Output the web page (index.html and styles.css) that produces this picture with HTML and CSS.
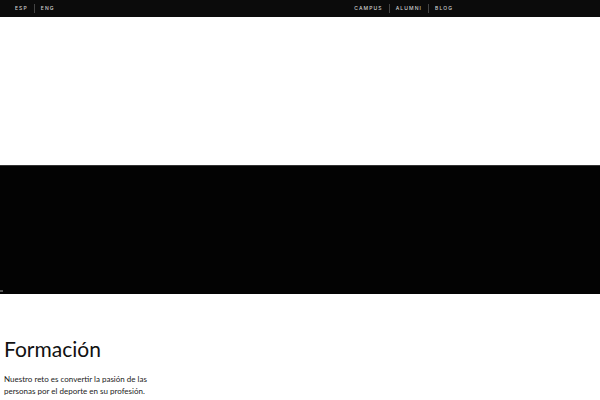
FILE: index.html
```html
<!DOCTYPE html>
<html lang="es">
<head>
<meta charset="utf-8">
<link rel="stylesheet" href="styles.css">
</head>
<body>
<header class="topbar">
  <nav class="langs">
    <a class="item">ESP</a>
    <span class="sep"></span>
    <a class="item">ENG</a>
  </nav>
  <nav class="links">
    <a class="item">CAMPUS</a>
    <span class="sep"></span>
    <a class="item">ALUMNI</a>
    <span class="sep"></span>
    <a class="item">BLOG</a>
  </nav>
</header>
<div class="blank"></div>
<div class="video"><span class="broken"></span></div>
<section class="intro">
  <h1 class="title">Formación</h1>
  <p class="lead">Nuestro reto es convertir la pasión de las personas por el deporte en su profesión.</p>
</section>
</body>
</html>
```
FILE: styles.css
```css
* { box-sizing: border-box; }
html, body { margin: 0; padding: 0; background: #fff; }
body { font-family: Lato, "Noto Sans", sans-serif; color: #111; overflow: hidden; }
.topbar {
  height: 17px;
  background: #0b0b0b;
  display: flex;
  justify-content: space-between;
  align-items: center;
  padding: 0 147px 0 15px;
}
.langs, .links { display: flex; align-items: center; gap: 6px; }
.item {
  color: #d0d0d0;
  font-family: Inter, sans-serif;
  font-size: 5px;
  letter-spacing: 1.1px;
  font-weight: 500;
  line-height: 1;
}
.sep { width: 1px; height: 9px; background: #444; }
.blank { height: 148px; }
.video {
  height: 129px;
  background: #030303;
  border-top: 1px solid #333;
  position: relative;
}
.broken {
  position: absolute;
  left: 0; bottom: 2px;
  width: 3px; height: 2px;
  background: #555;
}
.intro { padding: 42px 4px 0; }
.title {
  margin: 0;
  font-size: 21px;
  font-weight: 400;
  letter-spacing: 0;
  line-height: 26px;
}
.lead {
  margin: 11px 0 0;
  width: 150px;
  font-size: 8px;
  line-height: 12px;
  color: #222;
}
```
